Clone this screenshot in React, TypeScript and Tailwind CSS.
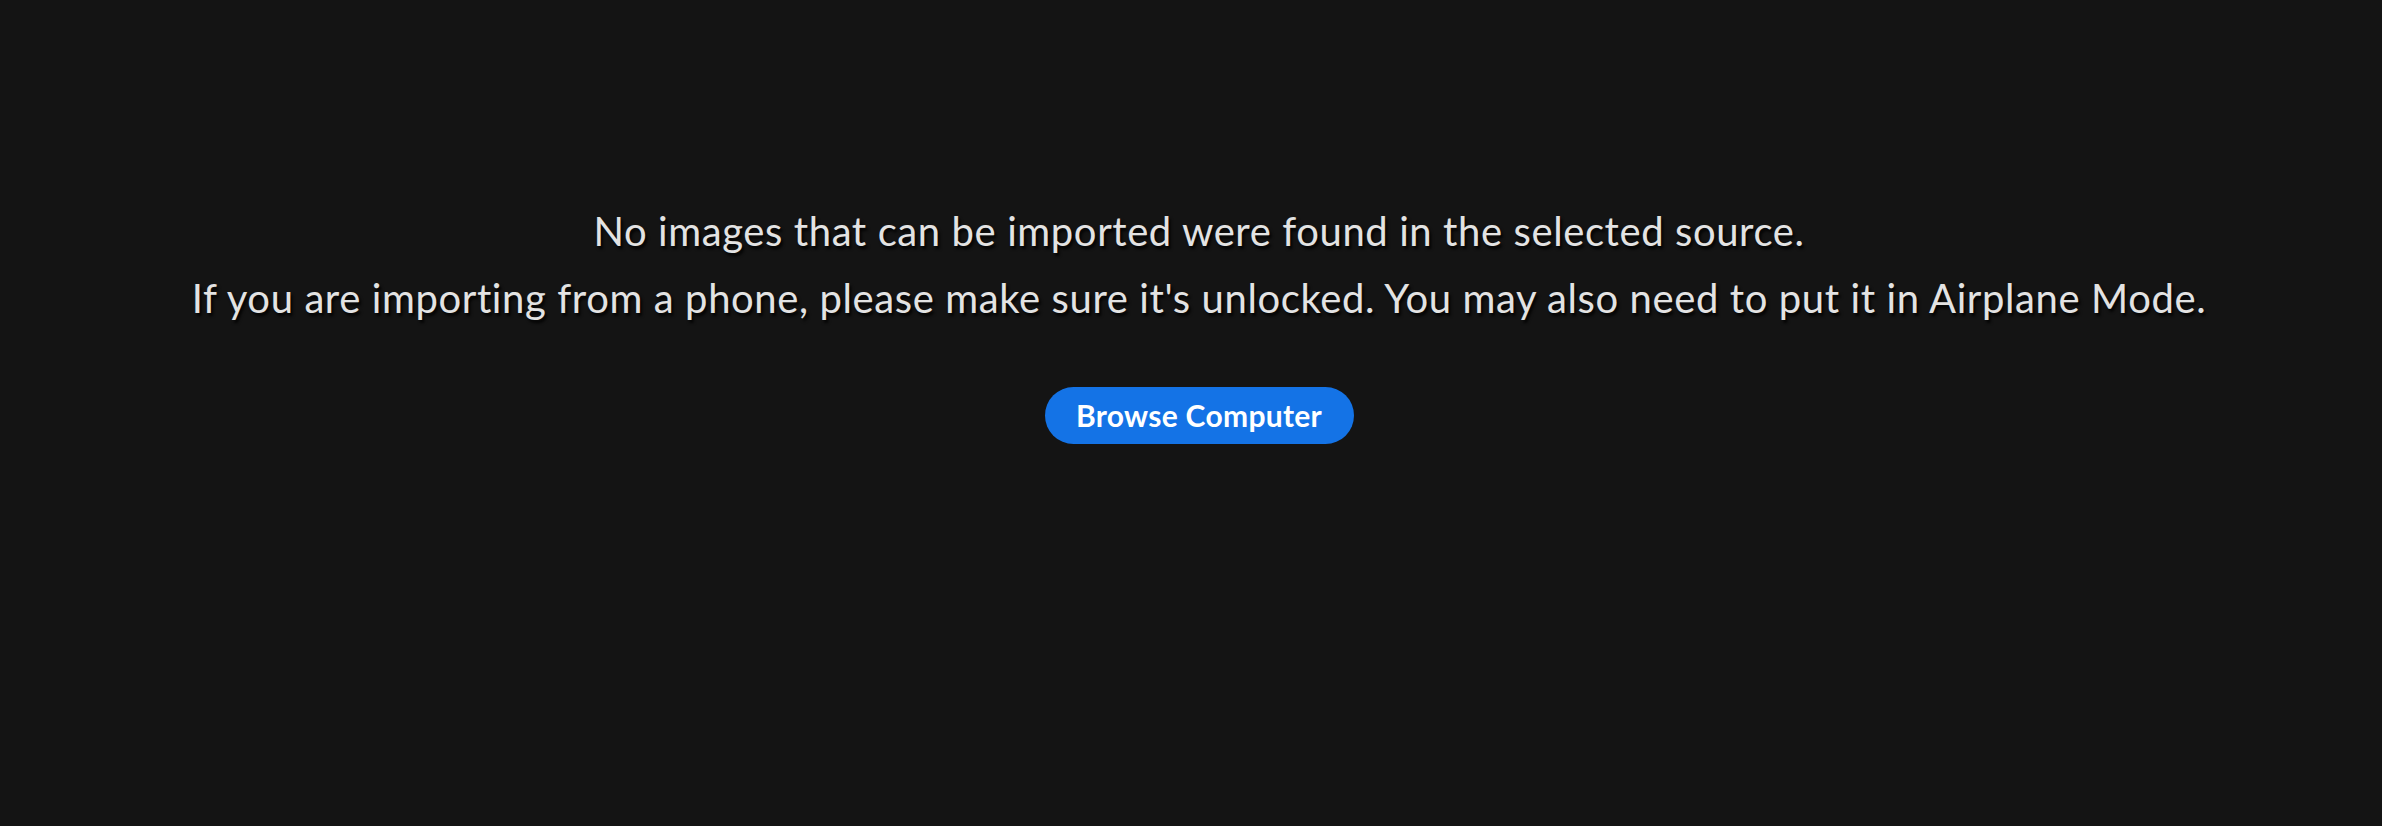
export default function App() {
    return (
        <div
            className="w-full h-[826px] bg-[#141414] flex flex-col items-center pt-[198px] pl-[16px]"
            style={{ fontFamily: 'Lato, "Noto Sans", sans-serif' }}
        >
            <p className="text-[40px] leading-[67px] tracking-[0.6px] text-[#e3e3e3] [text-shadow:2px_3px_3px_rgba(0,0,0,0.9)]">
                No images that can be imported were found in the selected source.
            </p>
            <p className="text-[40px] leading-[67px] tracking-[0.6px] text-[#e3e3e3] [text-shadow:2px_3px_3px_rgba(0,0,0,0.9)]">
                If you are importing from a phone, please make sure it's unlocked. You may also need to put it in Airplane Mode.
            </p>
            <button className="mt-[55px] h-[57px] w-[309px] rounded-full bg-[#1473e6] text-[30px] font-bold tracking-[0.3px] text-white">
                Browse Computer
            </button>
        </div>
    );
}
